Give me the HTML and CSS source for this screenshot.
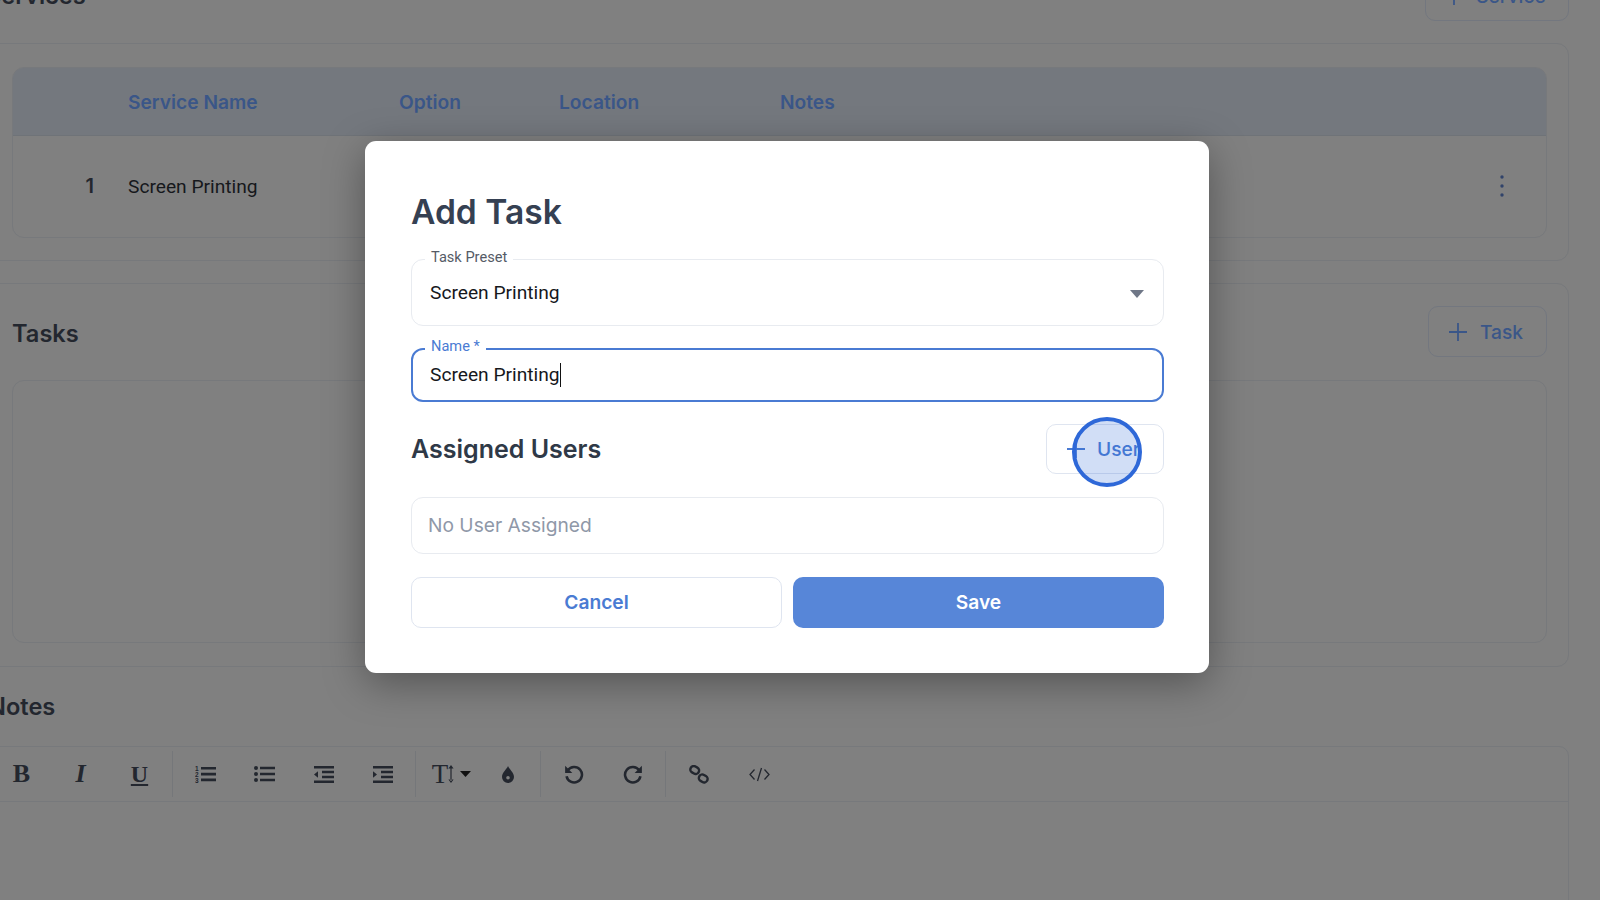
FILE: index.html

```html
<!DOCTYPE html>
<html lang="en">
<head>
    <meta charset="UTF-8">
    <title>Add Task</title>
    <link rel="stylesheet" href="styles.css">
</head>
<body>
    <div class="page">
        <div class="section-head">
            <h2>Services</h2>
            <button class="ghost-btn service-btn"><svg width="20" height="20" viewBox="0 0 20 20"><path d="M10 1v18M1 10h18"/></svg>Service</button>
        </div>
        <div class="card">
            <div class="table">
                <div class="table-row table-header">
                    <div></div>
                    <div>Service Name</div>
                    <div>Option</div>
                    <div>Location</div>
                    <div>Notes</div>
                    <div></div>
                </div>
                <div class="table-row table-body">
                    <div class="row-num">1</div>
                    <div class="row-name">Screen Printing</div>
                    <div></div>
                    <div></div>
                    <div></div>
                    <div class="row-menu"><svg width="6" height="24" viewBox="0 0 6 24"><circle cx="3" cy="3" r="1.700"/><circle cx="3" cy="12" r="1.700"/><circle cx="3" cy="21" r="1.700"/></svg></div>
                </div>
            </div>
        </div>

        <div class="card tasks-card">
            <div class="tasks-head">
                <h2>Tasks</h2>
                <button class="ghost-btn"><svg width="20" height="20" viewBox="0 0 20 20"><path d="M10 1v18M1 10h18"/></svg>Task</button>
            </div>
            <div class="tasks-empty"></div>
        </div>

        <h2 class="notes-title">Notes</h2>
        <div class="editor">
            <div class="toolbar">
                <div class="tool-group">
                    <span class="tool tool-b">B</span>
                    <span class="tool tool-i">I</span>
                    <span class="tool tool-u">U</span>
                </div>
                <div class="tool-group">
                    <span class="tool"><svg width="22" height="18" viewBox="0 0 22 18"><text x="0" y="5.500" class="mini-num">1</text><text x="0" y="11.500" class="mini-num">2</text><text x="0" y="17.500" class="mini-num">3</text><path d="M6 2h15v2.600H6zM6 7.800h15v2.600H6zM6 13.600h15v2.600H6z"/></svg></span>
                    <span class="tool"><svg width="21" height="16" viewBox="0 0 21 16"><circle cx="2" cy="2" r="2"/><circle cx="2" cy="8" r="2"/><circle cx="2" cy="14" r="2"/><path d="M6 .7h15v2.600H6zM6 6.700h15v2.600H6zM6 12.700h15v2.600H6z"/></svg></span>
                    <span class="tool"><svg width="20" height="17" viewBox="0 0 20 17"><path d="M0 0h20v2.600H0zM0 14.400h20V17H0zM8 4.800h12v2.500H8zM8 9.700h12v2.500H8zM4 5.200v6.600L0 8.500z"/></svg></span>
                    <span class="tool"><svg width="20" height="17" viewBox="0 0 20 17"><path d="M0 0h20v2.600H0zM0 14.400h20V17H0zM8 4.800h12v2.500H8zM8 9.700h12v2.500H8zM0 5.200v6.600l4-3.300z"/></svg></span>
                </div>
                <div class="tool-group">
                    <span class="tool tool-size">T<svg width="6" height="18" viewBox="0 0 6 18"><path d="M2.400 2h1.200v14H2.400zM3 0l2.600 3.400H.4zM3 18l2.600-3.400H.4z"/></svg><svg class="size-caret" width="11" height="6" viewBox="0 0 11 6"><path d="M0 0h11L5.500 6z"/></svg></span>
                    <span class="tool"><svg width="12" height="17" viewBox="0 0 12 17"><path fill-rule="evenodd" d="M6 0c1 3 6 6.500 6 11a6 6 0 0 1-12 0C0 6.500 5 3 6 0zM6 10a1.800 1.800 0 1 0 0 3.600A1.800 1.800 0 0 0 6 10z"/></svg></span>
                </div>
                <div class="tool-group">
                    <span class="tool"><svg class="line-icon" width="20" height="20" viewBox="0 0 18 18"><path d="M3.500 5.500A7 7 0 1 1 2.300 11"/><path class="solid" d="M1 1.500v6.500h6.500z"/></svg></span>
                    <span class="tool"><svg class="line-icon" width="20" height="20" viewBox="0 0 18 18"><path d="M14.500 5.500A7 7 0 1 0 15.700 11"/><path class="solid" d="M17 1.500v6.500h-6.500z"/></svg></span>
                </div>
                <div class="tool-group tool-group-last">
                    <span class="tool"><svg class="line-icon" width="20" height="19" viewBox="0 0 19 18"><rect x="1.200" y="1.500" width="8.500" height="6.500" rx="3.200" transform="rotate(30 5.500 4.700)"/><rect x="9.300" y="9.500" width="8.500" height="6.500" rx="3.200" transform="rotate(30 13.500 12.700)"/></svg></span>
                    <span class="tool tool-code"><svg class="code-icon" width="21" height="15" viewBox="0 0 21 14"><path d="M5.500 2 1 7l4.500 5M15.500 2 20 7l-4.500 5M12.500.5l-4 13"/></svg></span>
                </div>
            </div>
        </div>
    </div>

    <!-- modal over the dimmed page -->
    <div class="modal">
        <h1>Add Task</h1>

        <div class="field field-select">
            <span class="field-label">Task Preset</span>
            <span class="field-value">Screen Printing</span>
            <svg class="select-arrow" width="14" height="8" viewBox="0 0 14 8"><path d="M0 0h14L7 8z"/></svg>
        </div>

        <div class="field field-name">
            <span class="field-label">Name *</span>
            <span class="field-value">Screen Printing</span><span class="caret"></span>
        </div>

        <div class="users-head">
            <h3>Assigned Users</h3>
            <button class="add-user"><svg width="20" height="20" viewBox="0 0 20 20"><path d="M10 1v18M1 10h18"/></svg>User</button>
        </div>

        <div class="users-empty">No User Assigned</div>

        <div class="modal-actions">
            <button class="btn-cancel">Cancel</button>
            <button class="btn-save">Save</button>
        </div>
    </div>

    <div class="click-ring"></div>
</body>
</html>
```

FILE: styles.css

```css
/* Page behind the modal: colours are the dimmed ones */
html, body {
    height: 100%;
    overflow: hidden;
}

body {
    margin: 0;
    background-color: #808080;
    color: #1c1e24;
    font-family: Inter, sans-serif;
}

button {
    font-family: Inter, sans-serif;
    cursor: pointer;
}

.page {
    width: 1581px;
    margin: -30px 0 0 -12px;
}

.section-head, .tasks-head {
    display: flex;
    justify-content: space-between;
    align-items: center;
    height: 51px;
    margin-bottom: 22px;
}

.tasks-head {
    margin-bottom: 23px;
}

.section-head h2 {
    margin-left: -2px;
}

.tasks-head h2 {
    padding-top: 4px;
}

h2 {
    margin: 0;
    font-size: 23.600px;
    font-weight: 600;
    color: #23272f;
}

.ghost-btn {
    display: flex;
    align-items: center;
    justify-content: center;
    gap: 12px;
    width: 119px;
    height: 51px;
    padding: 0 4px 0 0;
    background: transparent;
    border: 1px solid #73777f;
    border-radius: 10px;
    color: #3a5688;
    font-size: 19.200px;
    font-weight: 500;
}

.ghost-btn svg path {
    fill: none;
    stroke: #3a5688;
    stroke-width: 1.8;
}

.service-btn {
    width: 144px;
}

.card {
    padding: 23px 21px 22px 23px;
    margin-bottom: 22px;
    border: 1px solid #77797c;
    border-radius: 12px;
    box-sizing: border-box;
}

.table {
    height: 171px;
    border: 1px solid #77797c;
    border-radius: 12px;
    box-sizing: border-box;
    overflow: hidden;
}

.table-row {
    display: grid;
    grid-template-columns: 115px 271px 160px 221px 1fr 92px;
    align-items: center;
}

.table-header {
    height: 68px;
    box-sizing: border-box;
    background-color: #74787e;
    border-bottom: 1px solid #6f7378;
    color: #3a5688;
    font-size: 19.200px;
    font-weight: 600;
}

.table-body {
    height: 100px;
    font-size: 19.200px;
}

.row-num {
    padding-right: 34px;
    text-align: right;
    color: #23272f;
    font-size: 20px;
    font-weight: 600;
}

.row-name {
    font-family: Roboto, sans-serif;
    color: #16181c;
}

.row-menu svg {
    display: block;
    margin-left: 45px;
    fill: #30436a;
}

.tasks-card {
    height: 384px;
    margin-bottom: 0;
    padding-top: 22px;
}

.tasks-empty {
    height: 263px;
    border: 1px solid #77797c;
    border-radius: 12px;
    box-sizing: border-box;
}

.notes-title {
    height: 34px;
    margin: 23px 0 22px 0;
    line-height: 34px;
}

.editor {
    height: 300px;
    border: 1px solid #77797c;
    border-radius: 10px 10px 0 0;
    box-sizing: border-box;
}

.toolbar {
    display: flex;
    align-items: center;
    height: 54px;
    border-bottom: 1px solid #77797c;
    box-sizing: content-box;
    color: #23272f;
}

.tool-group {
    display: flex;
    align-items: center;
    height: 46px;
    padding: 0 3px 0 3px;
    border-right: 1px solid #75777a;
}

.tool-group-last {
    border-right: none;
}

.tool {
    display: flex;
    align-items: center;
    justify-content: center;
    width: 59px;
    height: 46px;
    fill: #23272f;
}

.tool-code {
    padding-left: 3px;
    box-sizing: border-box;
}

.tool-b, .tool-i, .tool-u {
    font-family: "Liberation Serif", serif;
    font-size: 26px;
    font-weight: 700;
}

.tool-i {
    font-style: italic;
}

.tool-u {
    text-decoration: underline;
    text-underline-offset: 2px;
    font-size: 24px;
}

.tool-size {
    font-family: "Liberation Serif", serif;
    font-size: 27px;
    padding-left: 6px;
    box-sizing: border-box;
}

.size-caret {
    margin-left: 6px;
    fill: #111;
}

.mini-num {
    font-family: "Liberation Sans", sans-serif;
    font-size: 6.500px;
    font-weight: 700;
}

.line-icon {
    fill: none;
    stroke: #23272f;
    stroke-width: 2.300;
}

.line-icon .solid {
    fill: #23272f;
    stroke: none;
}

.code-icon {
    fill: none;
    stroke: #23272f;
    stroke-width: 1.300;
}

/* Modal */
.modal {
    position: absolute;
    left: 365px;
    top: 141px;
    display: flex;
    flex-direction: column;
    gap: 23px;
    width: 844px;
    height: 532px;
    padding: 45px 45px 45px 46px;
    background-color: #fff;
    border-radius: 11px;
    box-shadow: 0 10px 40px rgba(0, 0, 0, 0.35);
    box-sizing: border-box;
}

h1 {
    margin: 0;
    height: 50px;
    line-height: 51px;
    font-size: 33.600px;
    font-weight: 600;
    color: #354052;
}

.field {
    position: relative;
    display: flex;
    align-items: center;
    padding: 0 18px;
    border: 1px solid #e8ebf0;
    border-radius: 12px;
    box-sizing: border-box;
}

.field-select {
    height: 68px;
    margin-bottom: -1px;
}

.field-name {
    height: 54px;
    margin-bottom: -1px;
    border: 2px solid #4a7bd3;
    padding: 0 17px;
}

.field-label {
    position: absolute;
    left: 13px;
    top: -11px;
    padding: 0 6px;
    background-color: #fff;
    font-family: Roboto, sans-serif;
    font-size: 14.600px;
    line-height: 16px;
    color: #555b66;
}

.field-name .field-label {
    left: 12px;
    top: -12px;
    color: #4a7bd3;
}

.field-value {
    font-family: Roboto, sans-serif;
    font-size: 19.200px;
    color: #16181c;
}

.caret {
    width: 1px;
    height: 24px;
    background-color: #111;
}

.select-arrow {
    position: absolute;
    right: 19px;
    top: 30px;
    fill: #6f7787;
}

.users-head {
    display: flex;
    justify-content: space-between;
    align-items: center;
    height: 50px;
}

h3 {
    margin: 0;
    font-size: 25px;
    font-weight: 600;
    color: #2f3947;
}

.add-user {
    display: flex;
    align-items: center;
    gap: 11px;
    width: 118px;
    height: 50px;
    padding: 0 0 0 19px;
    background-color: #fff;
    border: 1px solid #dfe5f0;
    border-radius: 10px;
    color: #4a7bd3;
    font-size: 19.200px;
    font-weight: 500;
}

.add-user svg path {
    fill: none;
    stroke: #4a7bd3;
    stroke-width: 1.800;
}

.users-empty {
    display: flex;
    align-items: center;
    height: 58px;
    padding-left: 16px;
    border: 1px solid #e8ebf0;
    border-radius: 12px;
    box-sizing: border-box;
    font-family: Inter, sans-serif;
    font-size: 19.200px;
    color: #8f98a8;
}

.modal-actions {
    display: grid;
    grid-template-columns: 1fr 1fr;
    gap: 11px;
}

.btn-cancel, .btn-save {
    height: 51px;
    padding-bottom: 3px;
    border-radius: 10px;
    font-size: 19.200px;
    font-weight: 600;
}

.btn-cancel {
    background-color: #fff;
    border: 1px solid #dfe5f0;
    color: #4a7bd3;
}

.btn-save {
    background-color: #5786d8;
    border: none;
    color: #fff;
}

/* click highlight from the recording */
.click-ring {
    position: absolute;
    left: 1072px;
    top: 417px;
    width: 70px;
    height: 70px;
    background-color: rgba(46, 104, 216, 0.22);
    border: 4px solid #2e68d8;
    border-radius: 50%;
    box-sizing: border-box;
}
```
